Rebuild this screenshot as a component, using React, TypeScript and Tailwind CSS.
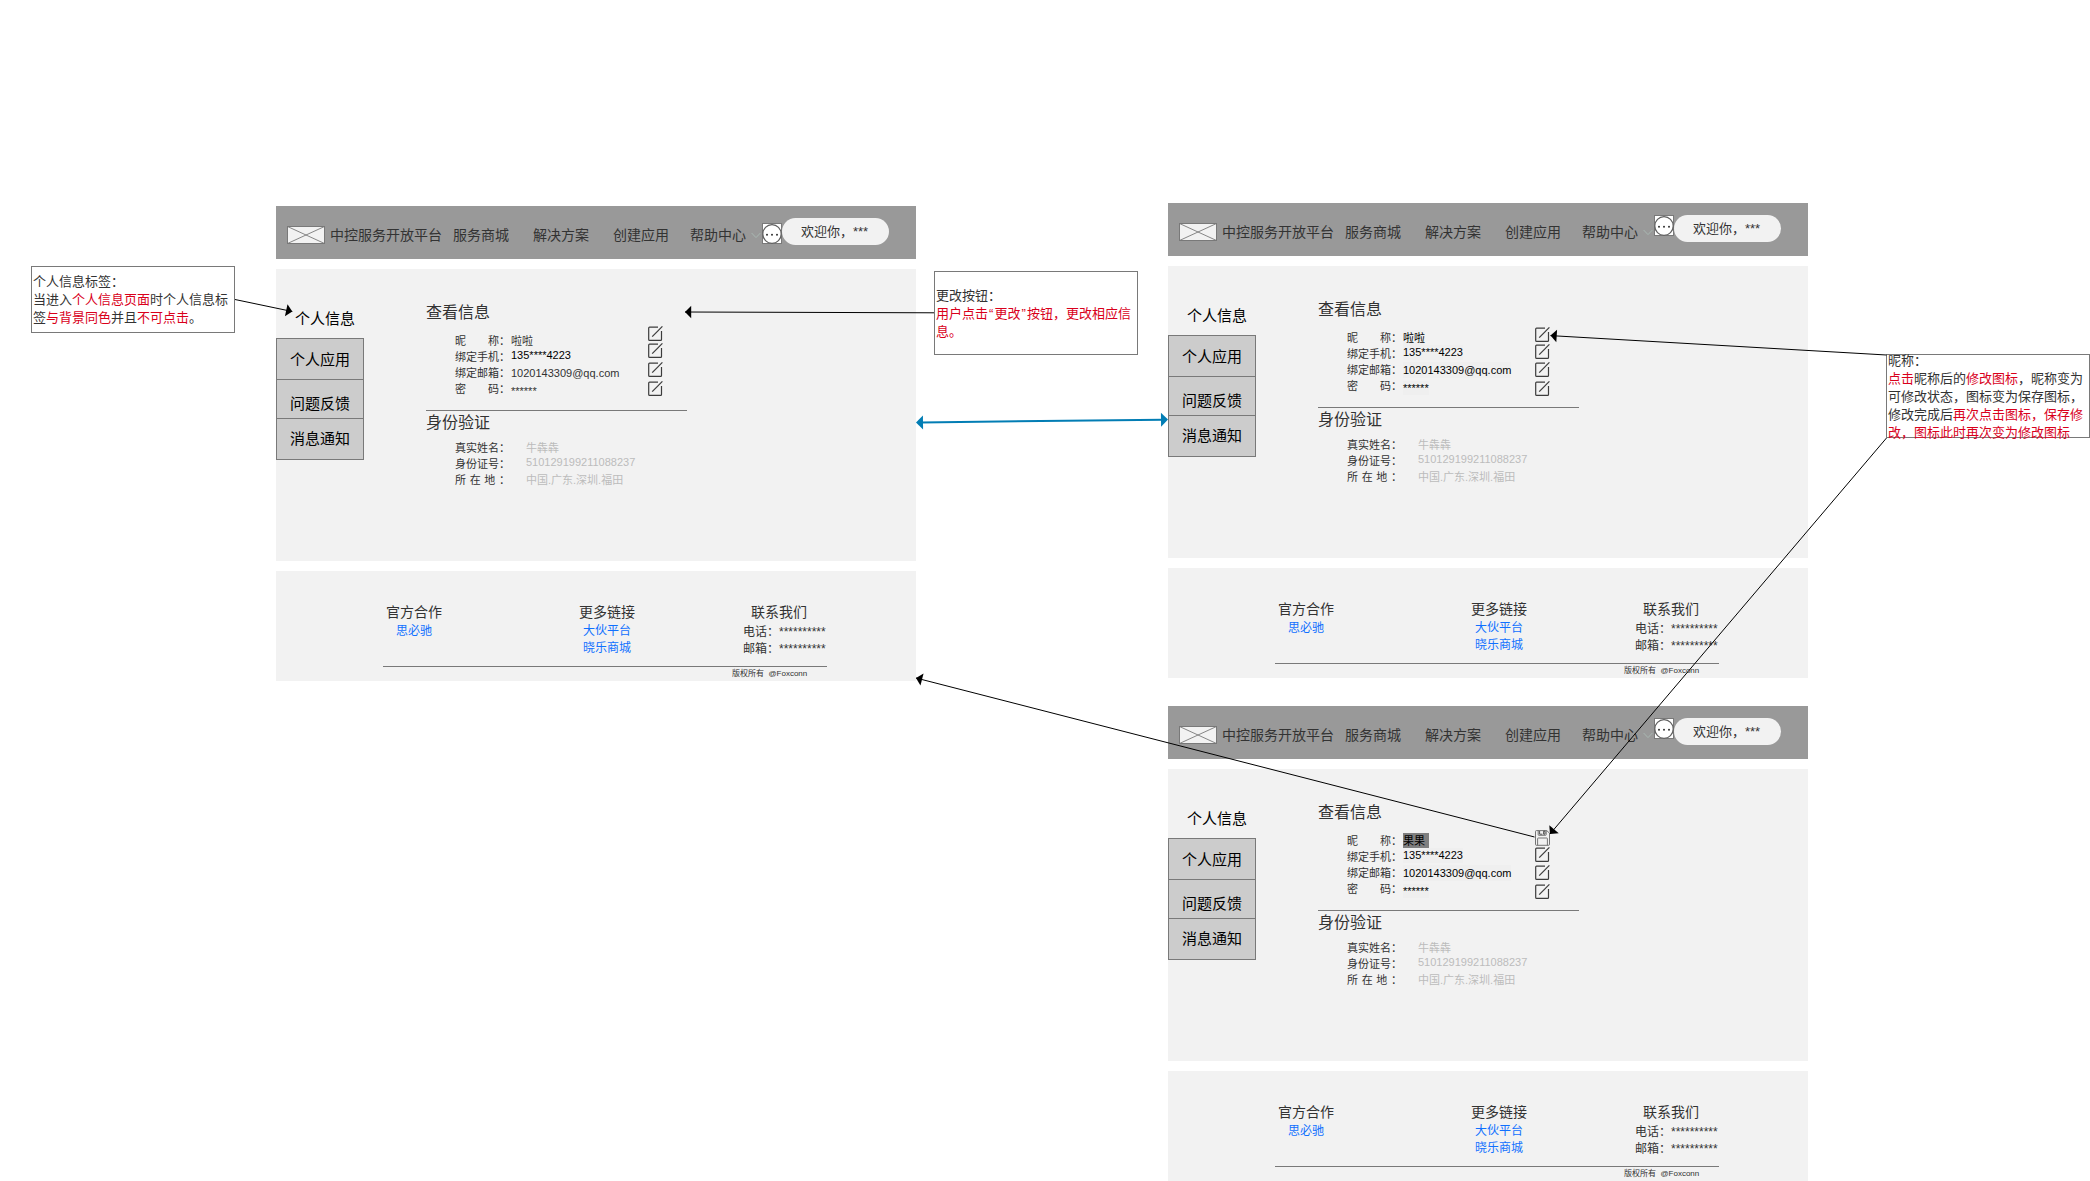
import type { ReactNode } from 'react';

type Variant = 'view' | 'editable' | 'editing';

const Placeholder = () => (
  <svg className="mt-5 ml-[11px] h-[18px] w-[38px] shrink-0" viewBox="0 0 38 18" fill="#f2f2f2" stroke="#797979">
    <rect x="0.5" y="0.5" width="37" height="17" />
    <path d="M0.5 0.5L37.5 17.5M37.5 0.5L0.5 17.5" strokeWidth="0.9" />
  </svg>
);

const Chevron = () => (
  <svg className="mt-[26px] ml-[4px] h-[7px] w-[10px] shrink-0" viewBox="0 0 10 7" fill="none" stroke="#a9b8b2">
    <path d="M0.6 1L5 5.6L9.4 1" />
  </svg>
);

const Bubble = ({ className }: { className: string }) => (
  <svg className={`h-[21px] w-[20px] shrink-0 ${className}`} viewBox="0 0 20 21" fill="#fff" stroke="#797979">
    <rect x="0.5" y="0.5" width="19" height="20" />
    <ellipse cx="10" cy="11" rx="9.2" ry="9.3" stroke="#5e5e5e" strokeWidth="1.2" />
    <g fill="#333" stroke="none">
      <circle cx="5" cy="11.8" r="1" />
      <circle cx="10" cy="11.8" r="1" />
      <circle cx="15" cy="11.8" r="1" />
    </g>
  </svg>
);

const EditIcon = () => (
  <svg className="h-[15px] w-[15px] shrink-0" viewBox="0 0 15 15" fill="none" stroke="#3c3c3c" strokeWidth="1.2">
    <path d="M10 1.1H1.6Q0.7 1.1 0.7 2V13.4Q0.7 14.3 1.6 14.3H12.6Q13.5 14.3 13.5 13.4V5" />
    <path d="M4.2 10.6L14.4 0.4" />
  </svg>
);

const SaveIcon = () => (
  <svg className="h-[16px] w-[15px] shrink-0" viewBox="0 0 15 16" fill="none" stroke="#666" strokeWidth="0.9">
    <path d="M1.4 0.6H11.8L14.5 3.2V14.4Q14.5 15.3 13.6 15.3H1.4Q0.5 15.3 0.5 14.4V1.5Q0.5 0.6 1.4 0.6Z" />
    <path d="M3.2 0.6V4.7Q3.2 5.3 3.8 5.3H10.6Q11.2 5.3 11.2 4.7V0.6" />
    <path d="M4.6 1V4.2H7.4M8.6 1.2H10V4.2H8.6Z" stroke="#444" />
    <path d="M2.6 15.2V8.6Q2.6 8 3.2 8H11.8Q12.4 8 12.4 8.6V15.2" />
  </svg>
);

function Header({ variant }: { variant: Variant }) {
  return (
    <header className="flex h-[53px] bg-[#999999] text-[14px] leading-[20px] whitespace-nowrap text-[#333333]">
      <Placeholder />
      <span className="mt-[19px] ml-[5px] w-[123px]">中控服务开放平台</span>
      <nav className="mt-[19px] flex">
        <span className="w-[80px]">服务商城</span>
        <span className="w-[80px]">解决方案</span>
        <span className="w-[77px]">创建应用</span>
        <span className="w-[57px]">帮助中心</span>
      </nav>
      <Chevron />
      <Bubble className={variant === 'view' ? 'mt-[17px] ml-px' : 'mt-[12px] ml-px'} />
      <div className="mt-3 h-[27px] w-[107px] rounded-full bg-[#f2f2f2] pl-[19px] text-[13px] leading-[27px]">
        欢迎你，***
      </div>
    </header>
  );
}

function Sidebar() {
  return (
    <aside className="w-[88px] shrink-0 pt-[40px] text-[15px] leading-[20px] text-black">
      <div className="pl-[19px]">个人信息</div>
      <ul className="mt-[9px] border border-[#797979] bg-[#cccccc] text-center">
        <li className="h-[41px] border-b border-[#797979] pt-[11px]">个人应用</li>
        <li className="h-[39px] border-b border-[#797979] pt-[14px]">问题反馈</li>
        <li className="h-[40px] pt-[10px]">消息通知</li>
      </ul>
    </aside>
  );
}

function Profile({ variant }: { variant: Variant }) {
  const view = variant === 'view';
  const tone = view ? 'text-[#333333]' : 'text-black';
  const field = view ? '' : 'bg-[#efefef]';
  return (
    <section className="ml-[62px] w-[261px] pt-8 whitespace-nowrap text-[#333333]">
      <h2 className="h-6 text-[16px] leading-[24px]">查看信息</h2>
      <div className="flex h-[85px] text-[11px]">
        <div className="w-[56px] pt-2 pl-[29px] leading-[16px]">
          <div>昵　　称：</div>
          <div>绑定手机：</div>
          <div>绑定邮箱：</div>
          <div>密　　码：</div>
        </div>
        <div className={`flex flex-col items-start pl-[29px] ${view ? 'w-[166px]' : 'w-[161px]'} ${tone}`}>
          {variant === 'editing' ? (
            <div className="mt-2 h-[15px] w-[26px] bg-[#7f7f7f] leading-[16px]">果果</div>
          ) : (
            <div className={`mt-2 h-[15px] leading-[16px] ${field}`}>啦啦</div>
          )}
          <div className={`h-[15px] leading-[15px] text-black ${field}`}>135****4223</div>
          <div className={`mt-[2px] h-[16px] leading-[16px] ${field}`}>1020143309@qq.com</div>
          <div className={`mt-[3px] h-[14px] leading-[14px] ${field}`}>******</div>
        </div>
        {view ? (
          <div className="flex flex-col">
            <div className="mt-[1px] h-[17px]"><EditIcon /></div>
            <div className="h-[19px]"><EditIcon /></div>
            <div className="h-[19px]"><EditIcon /></div>
            <EditIcon />
          </div>
        ) : (
          <div className="flex flex-col pt-[5px]">
            <div className="h-[17px]">
              {variant === 'editing' ? <SaveIcon /> : <EditIcon />}
            </div>
            <div className="h-[18px]"><EditIcon /></div>
            <div className="h-[19px]"><EditIcon /></div>
            <EditIcon />
          </div>
        )}
      </div>
      <hr className="border-0 border-t border-solid border-[#797979]" />
      <h2 className="h-[29px] text-[16px] leading-[24px]">身份验证</h2>
      <div className="flex pl-[29px] text-[11px]">
        <div className="w-[71px] leading-[16px]">
          <div>真实姓名：</div>
          <div>身份证号：</div>
          <div className="[word-spacing:0.6px]">所 在 地 ：</div>
        </div>
        <div className="text-[#bcbcbc]">
          <div className="h-[15px] leading-[16px]">牛犇犇</div>
          <div className="h-[17px] leading-[14px]">510129199211088237</div>
          <div className="leading-[16px]">中国.广东.深圳.福田</div>
        </div>
      </div>
    </section>
  );
}

function Footer() {
  return (
    <footer className="mt-[10px] h-[110px] bg-[#f2f2f2] pt-[31px] text-[12px] leading-[17px] whitespace-nowrap text-[#333333]">
      <div className="flex h-[64px] pl-[110px]">
        <div className="w-[193px]">
          <h3 className="h-[21px] text-[14px] leading-[20px]">官方合作</h3>
          <div className="pl-[10px] text-[#1070ff]">思必驰</div>
        </div>
        <div className="w-[164px]">
          <h3 className="h-[21px] text-[14px] leading-[20px]">更多链接</h3>
          <div className="pl-[4px] text-[#1070ff]">
            <div>大伙平台</div>
            <div>晓乐商城</div>
          </div>
        </div>
        <div>
          <h3 className="h-[22px] pl-[8px] text-[14px] leading-[20px]">联系我们</h3>
          <div>电话：**********</div>
          <div>邮箱：**********</div>
        </div>
      </div>
      <hr className="ml-[107px] w-[444px] border-0 border-t border-solid border-[#797979]" />
      <div className="pl-[456px] text-[8px] leading-[14px]">版权所有 &nbsp;@Foxconn</div>
    </footer>
  );
}

function Screen({ variant, className }: { variant: Variant; className: string }) {
  return (
    <article className={`absolute w-[640px] ${className}`}>
      <Header variant={variant} />
      <main className="mt-[10px] flex h-[292px] bg-[#f2f2f2]">
        <Sidebar />
        <Profile variant={variant} />
      </main>
      <Footer />
    </article>
  );
}

function Note({ className, children }: { className: string; children: ReactNode }) {
  return (
    <div
      className={`absolute flex w-[204px] flex-col justify-center border border-[#797979] bg-white pl-px text-[13px] leading-[18px] whitespace-nowrap text-[#333333] ${className}`}
    >
      {children}
    </div>
  );
}

const Red = ({ children }: { children: ReactNode }) => <span className="text-[#d9001b]">{children}</span>;

function head(tx: number, ty: number, fx: number, fy: number, size: number) {
  const d = Math.hypot(tx - fx, ty - fy);
  const ux = (tx - fx) / d;
  const uy = (ty - fy) / d;
  const bx = tx - ux * size;
  const by = ty - uy * size;
  return `${tx},${ty} ${bx - uy * size},${by + ux * size} ${bx + uy * size},${by - ux * size}`;
}

const arrows = [
  { from: [235, 299.5], to: [292.3, 311.5] },
  { from: [934, 312.8], to: [685, 312] },
  { from: [1886.5, 355], to: [1550.5, 335.6] },
  { from: [1886.5, 438], to: [1550, 834] },
  { from: [1534.5, 837], to: [916, 678] },
];

function Connectors() {
  return (
    <svg className="pointer-events-none absolute top-0 left-0 h-[1181px] w-[2090px]" viewBox="0 0 2090 1181">
      {arrows.map(({ from, to }) => (
        <g key={to.join()} fill="#000" stroke="#000">
          <line x1={from[0]} y1={from[1]} x2={to[0]} y2={to[1]} />
          <polygon points={head(to[0], to[1], from[0], from[1], 6.2)} stroke="none" />
        </g>
      ))}
      <g fill="#027db4">
        <line x1="921" y1="422.4" x2="1163" y2="419.7" stroke="#027db4" strokeWidth="2" />
        <polygon points={head(916, 422.5, 1168, 419.6, 7)} />
        <polygon points={head(1168, 419.6, 916, 422.5, 7)} />
      </g>
    </svg>
  );
}

export default function App() {
  return (
    <div className="relative h-[1181px] w-[2090px] overflow-hidden bg-white font-['Liberation_Sans','Noto_Sans_CJK_SC',sans-serif]">
      <Screen variant="view" className="top-[206px] left-[276px]" />
      <Screen variant="editable" className="top-[203px] left-[1168px]" />
      <Screen variant="editing" className="top-[706px] left-[1168px]" />

      <Note className="top-[266px] left-[31px] h-[67px]">
        <div>个人信息标签：</div>
        <div>当进入<Red>个人信息页面</Red>时个人信息标</div>
        <div>签<Red>与背景同色</Red>并且<Red>不可点击</Red>。</div>
      </Note>
      <Note className="top-[271px] left-[934px] h-[84px] pt-px">
        <div>更改按钮：</div>
        <div>
          <Red>
            用户点击<span className="inline-block w-[6.5px] text-center">“</span>更改
            <span className="inline-block w-[6.5px] text-center">”</span>按钮，更改相应信
          </Red>
        </div>
        <div><Red>息。</Red></div>
      </Note>
      <Note className="top-[354px] left-[1886px] h-[84px] pt-px">
        <div>昵称：</div>
        <div><Red>点击</Red>昵称后的<Red>修改图标</Red>，昵称变为</div>
        <div>可修改状态，图标变为保存图标，</div>
        <div>修改完成后<Red>再次点击图标，保存修</Red></div>
        <div><Red>改，图标此时再次变为修改图标</Red></div>
      </Note>

      <Connectors />
    </div>
  );
}
